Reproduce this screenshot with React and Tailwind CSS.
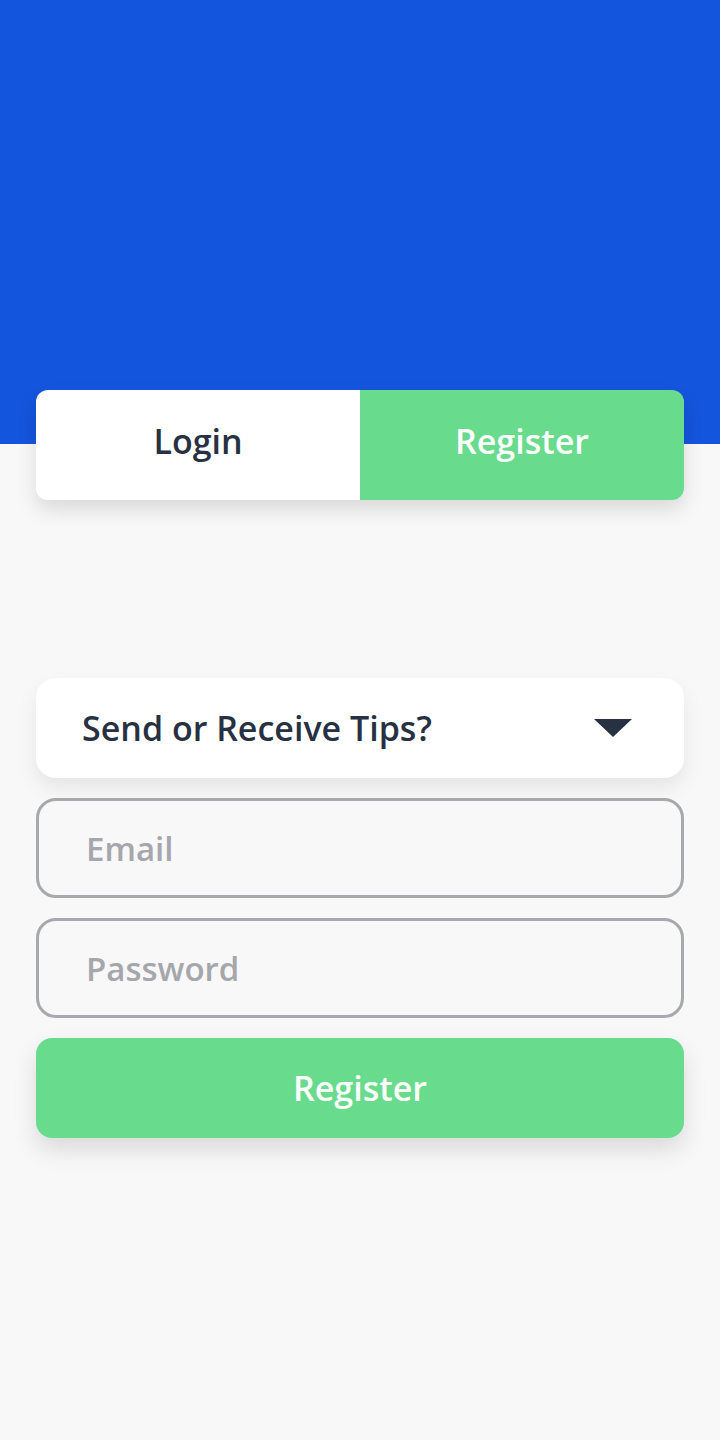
import React, { useState } from "react";

const App = () => {
    const [tab, setTab] = useState("register");
    const [email, setEmail] = useState("");
    const [password, setPassword] = useState("");

    return (
        <div className="min-h-[1440px] w-full bg-[#f8f8f8] font-['Open_Sans',sans-serif]">
            <div className="h-[444px] w-full bg-[#1455dd]" />

            <div className="px-9 -mt-[54px]">
                <div className="flex h-[110px] rounded-xl overflow-hidden shadow-[0_10px_20px_rgba(0,0,0,0.12)]">
                    <button
                        onClick={() => setTab("login")}
                        className="flex-1 bg-white text-[#273142] text-[34px] font-semibold pb-2"
                    >
                        Login
                    </button>
                    <button
                        onClick={() => setTab("register")}
                        className="flex-1 bg-[#68db8c] text-white text-[34px] font-semibold pb-2"
                    >
                        Register
                    </button>
                </div>

                <div className="mt-[178px] flex flex-col gap-5">
                    <div className="flex items-center justify-between h-[100px] bg-white rounded-[20px] pl-[46px] pr-[52px] shadow-[0_10px_20px_rgba(0,0,0,0.08)]">
                        <span className="text-[34px] font-semibold text-[#273142]">Send or Receive Tips?</span>
                        <svg width="38" height="18" viewBox="0 0 38 18">
                            <path d="M0 0 L38 0 L19 18 Z" fill="#273142" />
                        </svg>
                    </div>

                    <input
                        type="email"
                        placeholder="Email"
                        value={email}
                        onChange={(e) => setEmail(e.target.value)}
                        className="h-[100px] w-full rounded-[20px] border-[3px] border-[#a7a9ae] bg-transparent px-[47px] text-[33px] font-semibold text-[#273142] placeholder:text-[#a5a7ac] outline-none"
                    />
                    <input
                        type="password"
                        placeholder="Password"
                        value={password}
                        onChange={(e) => setPassword(e.target.value)}
                        className="h-[100px] w-full rounded-[20px] border-[3px] border-[#a7a9ae] bg-transparent px-[47px] text-[33px] font-semibold text-[#273142] placeholder:text-[#a5a7ac] outline-none"
                    />

                    <button className="h-[100px] w-full rounded-2xl bg-[#68db8c] text-white text-[34px] font-semibold shadow-[0_12px_24px_rgba(0,0,0,0.12)]">
                        Register
                    </button>
                </div>
            </div>
        </div>
    );
};

export default App;
